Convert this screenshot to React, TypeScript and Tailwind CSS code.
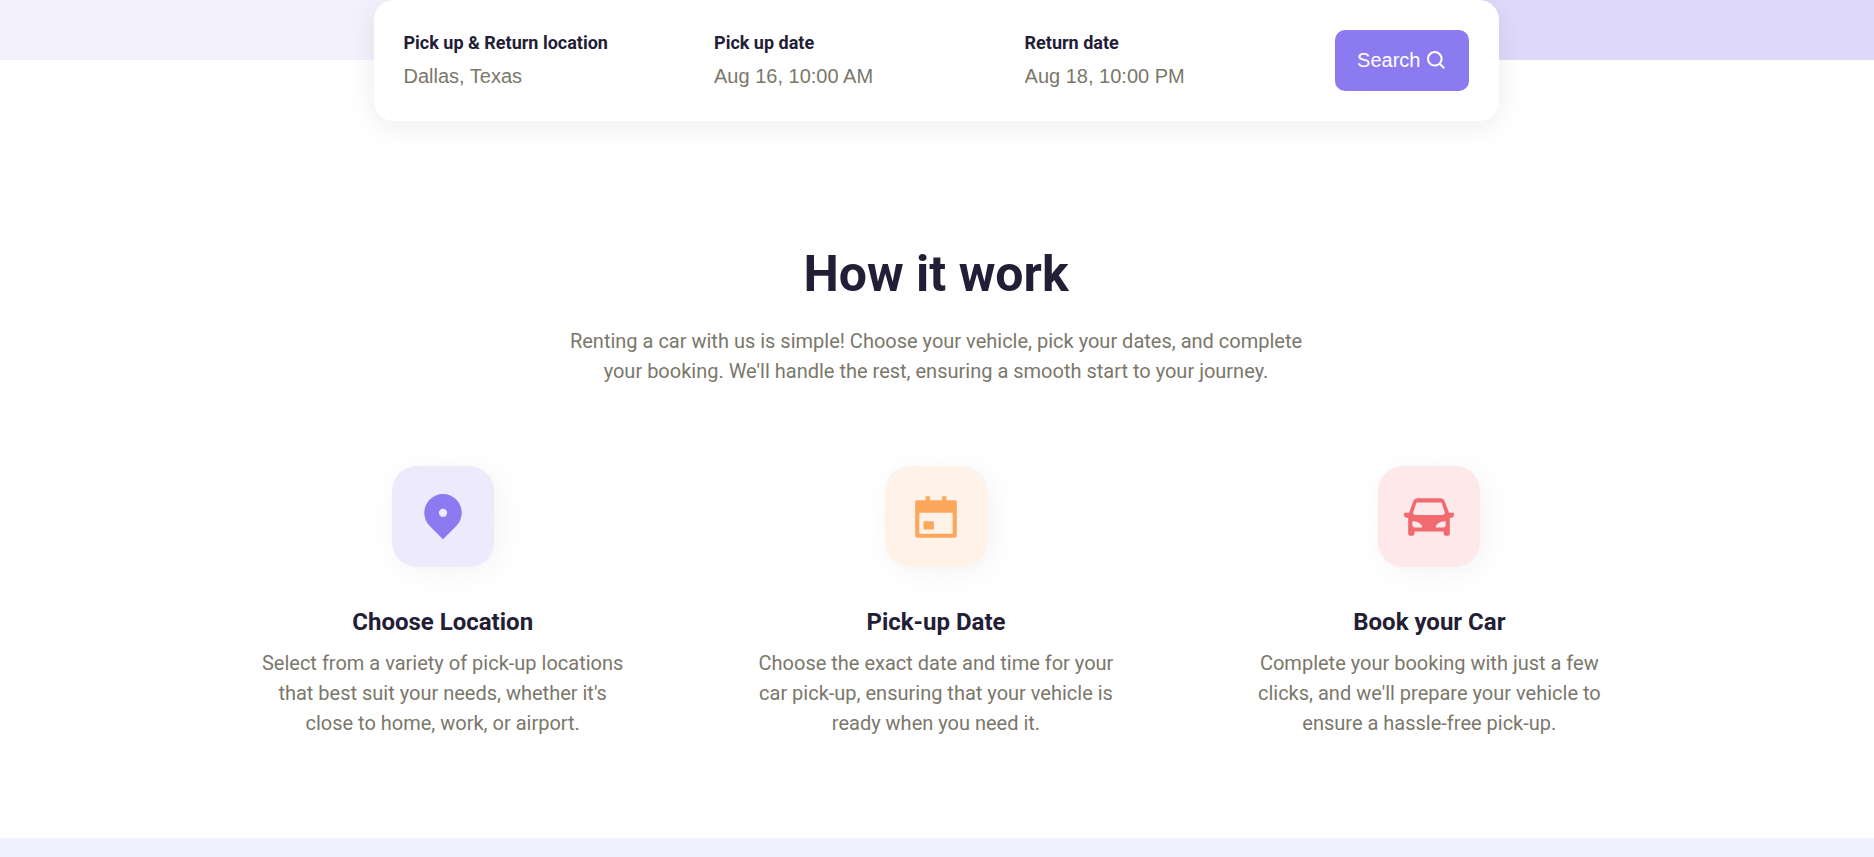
type Field = { id: string; label: string; value: string };

type Step = {
  title: string;
  text: string;
  viewBox: string;
  path: string;
  tone: string;
};

const fields: Field[] = [
  { id: "location", label: "Pick up & Return location", value: "Dallas, Texas" },
  { id: "pickup", label: "Pick up date", value: "Aug 16, 10:00 AM" },
  { id: "return", label: "Return date", value: "Aug 18, 10:00 PM" },
];

const steps: Step[] = [
  {
    title: "Choose Location",
    text: "Select from a variety of pick-up locations that best suit your needs, whether it's close to home, work, or airport.",
    viewBox: "0 1 24 24",
    path: "M18.364 17.364L12 23.728l-6.364-6.364a9 9 0 1 1 12.728 0zM12 13a2 2 0 1 0 0-4 2 2 0 0 0 0 4z",
    tone: "bg-[#edeafc] text-[#8b7af0]",
  },
  {
    title: "Pick-up Date",
    text: "Choose the exact date and time for your car pick-up, ensuring that your vehicle is ready when you need it.",
    viewBox: "0 -1 24 24",
    path: "M17 3h4a1 1 0 0 1 1 1v16a1 1 0 0 1-1 1H3a1 1 0 0 1-1-1V4a1 1 0 0 1 1-1h4V1h2v2h6V1h2v2zM4 9v10h16V9H4zm2 4h5v4H6v-4z",
    tone: "bg-[#fff2e8] text-[#fda75c]",
  },
  {
    title: "Book your Car",
    text: "Complete your booking with just a few clicks, and we'll prepare your vehicle to ensure a hassle-free pick-up.",
    viewBox: "0 1 24 24",
    path: "M22 13.5V21a1 1 0 0 1-1 1h-1a1 1 0 0 1-1-1v-1H5v1a1 1 0 0 1-1 1H3a1 1 0 0 1-1-1v-7.5l-1.243-.31A1 1 0 0 1 0 12.22v-.72a.5.5 0 0 1 .5-.5h1.875l2.138-5.702A2 2 0 0 1 6.386 4h11.228a2 2 0 0 1 1.873 1.298L21.625 11H23.5a.5.5 0 0 1 .5.5v.72a1 1 0 0 1-.757.97L22 13.5zM4 15v2a1 1 0 0 0 1 1h3.245a.5.5 0 0 0 .44-.736C7.88 15.754 6.318 15 4 15zm16 0c-2.317 0-3.879.755-4.686 2.264a.5.5 0 0 0 .441.736H19a1 1 0 0 0 1-1v-2zM6 6l-1.561 4.684A1 1 0 0 0 5.387 12h13.226a1 1 0 0 0 .948-1.316L18 6H6z",
    tone: "bg-[#fde9ea] text-[#f06a70]",
  },
];

function SearchForm() {
  return (
    <form
      onSubmit={(e) => e.preventDefault()}
      className="relative mx-auto -mt-[60px] grid w-full max-w-[1125px] grid-cols-[1fr_1fr_1fr_auto] items-center rounded-[20px] bg-white p-[30px] shadow-[0_5px_30px_rgba(0,0,0,0.08)]"
    >
      {fields.map((f) => (
        <div key={f.id} className="flex min-w-0 flex-col gap-[5px]">
          <label
            htmlFor={f.id}
            className="text-[18px] leading-[26px] font-bold text-[#231d36]"
          >
            {f.label}
          </label>
          <input
            id={f.id}
            type="text"
            defaultValue={f.value}
            className="w-full min-w-0 bg-transparent font-['Liberation_Sans',Arial,sans-serif] text-[20px] leading-[30px] text-[#7b776b] outline-none"
          />
        </div>
      ))}
      <button
        type="submit"
        className="flex h-[61px] items-center gap-[6px] rounded-[10px] bg-[#8b7af0] px-[22px] pb-[2px] font-['Liberation_Sans',Arial,sans-serif] text-[20px] text-white"
      >
        Search
        <svg
          viewBox="0 0 20 20"
          className="size-5"
          fill="none"
          stroke="currentColor"
          strokeWidth="2"
          aria-hidden="true"
        >
          <circle cx="8.8" cy="8.8" r="6.8" />
          <path d="M13.6 13.6l4.6 4.6" />
        </svg>
      </button>
    </form>
  );
}

function StepCard({ title, text, viewBox, path, tone }: Step) {
  return (
    <article className="flex flex-col items-center text-center">
      <div
        className={`flex h-[101px] w-[102px] items-center justify-center rounded-[25px] shadow-[5px_5px_30px_rgba(0,0,0,0.05)] ${tone}`}
      >
        <svg
          viewBox={viewBox}
          className="size-[50px]"
          fill="currentColor"
          fillRule="evenodd"
          aria-hidden="true"
        >
          <path d={path} />
        </svg>
      </div>
      <h3 className="mt-10 text-2xl leading-[30px] font-bold text-[#231d36]">
        {title}
      </h3>
      <p className="mt-[11px] max-w-[370px] text-[20px] leading-[30px] text-[#7b776b]">
        {text}
      </p>
    </article>
  );
}

export default function App() {
  return (
    <div className="bg-white font-[Roboto,sans-serif]">
      <header>
        <div className="grid h-[60px] grid-cols-2">
          <div className="bg-[#f3f1fe]" />
          <div className="bg-[#dfd9fa]" />
        </div>
        <div className="pr-[2px]">
          <SearchForm />
        </div>
      </header>

      <main className="pt-[121px] pr-[26px] pb-[100px] pl-6">
        <div className="mx-auto max-w-[760px] text-center">
          <h2 className="text-[50px] leading-[65px] font-bold text-[#231d36]">
            How it work
          </h2>
          <p className="mt-[19px] text-[20px] leading-[30px] text-[#7b776b]">
            Renting a car with us is simple! Choose your vehicle, pick your
            dates, and complete your booking. We'll handle the rest, ensuring a
            smooth start to your journey.
          </p>
        </div>
        <div className="mx-auto mt-20 grid max-w-[1480px] grid-cols-3">
          {steps.map((s) => (
            <StepCard key={s.title} {...s} />
          ))}
        </div>
      </main>

      <footer className="h-[19px] bg-[#eff1ff]" />
    </div>
  );
}
